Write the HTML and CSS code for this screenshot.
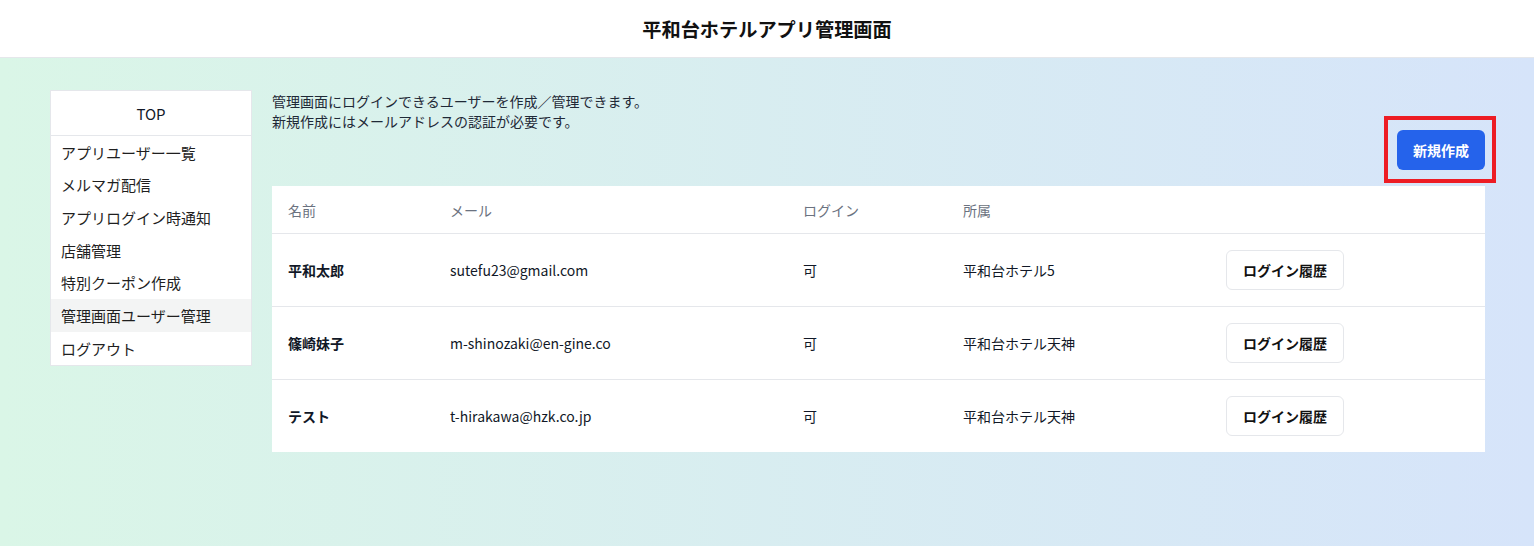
FILE: index.html
```html
<!DOCTYPE html>
<html lang="ja">
<head>
<meta charset="utf-8">
<title>平和台ホテルアプリ管理画面</title>
<link rel="stylesheet" href="styles.css">
</head>
<body>
<header class="topbar">
  <h1 class="title">平和台ホテルアプリ管理画面</h1>
</header>
<div class="page">
  <nav class="sidebar">
    <div class="side-top">TOP</div>
    <ul class="side-list">
      <li class="side-item">アプリユーザー一覧</li>
      <li class="side-item">メルマガ配信</li>
      <li class="side-item">アプリログイン時通知</li>
      <li class="side-item">店舗管理</li>
      <li class="side-item">特別クーポン作成</li>
      <li class="side-item active">管理画面ユーザー管理</li>
      <li class="side-item">ログアウト</li>
    </ul>
  </nav>
  <main class="content">
    <div class="desc">
      <p class="desc-line">管理画面にログインできるユーザーを作成／管理できます。</p>
      <p class="desc-line">新規作成にはメールアドレスの認証が必要です。</p>
    </div>
    <div class="actions">
      <div class="btn-wrap">
        <button class="btn-primary">新規作成</button>
        <span class="highlight"></span>
      </div>
    </div>
    <div class="table">
      <div class="row head">
        <div class="cell">名前</div>
        <div class="cell">メール</div>
        <div class="cell">ログイン</div>
        <div class="cell">所属</div>
        <div class="cell"></div>
      </div>
      <div class="row">
        <div class="cell name">平和太郎</div>
        <div class="cell">sutefu23@gmail.com</div>
        <div class="cell">可</div>
        <div class="cell">平和台ホテル5</div>
        <div class="cell"><button class="btn-outline">ログイン履歴</button></div>
      </div>
      <div class="row">
        <div class="cell name">篠崎妹子</div>
        <div class="cell">m-shinozaki@en-gine.co</div>
        <div class="cell">可</div>
        <div class="cell">平和台ホテル天神</div>
        <div class="cell"><button class="btn-outline">ログイン履歴</button></div>
      </div>
      <div class="row">
        <div class="cell name">テスト</div>
        <div class="cell">t-hirakawa@hzk.co.jp</div>
        <div class="cell">可</div>
        <div class="cell">平和台ホテル天神</div>
        <div class="cell"><button class="btn-outline">ログイン履歴</button></div>
      </div>
    </div>
  </main>
</div>
</body>
</html>
```
FILE: styles.css
```css
* { box-sizing: border-box; }
html, body { margin: 0; padding: 0; height: 100%; }
body {
  font-family: "Noto Sans CJK JP", "Noto Sans", sans-serif;
  color: #111827;
  background: linear-gradient(to right, #daf6e7, #d6e4fa);
}
.topbar {
  height: 58px;
  background: #fff;
  border-bottom: 1px solid #e5e7eb;
  display: flex;
  align-items: center;
  justify-content: center;
}
.title {
  margin: 0;
  font-size: 19.2px;
  font-weight: 700;
  color: #111;
}
.page {
  display: flex;
  align-items: flex-start;
  gap: 20px;
  padding: 32px 49px 0 50px;
}
.sidebar {
  width: 202px;
  flex: none;
  background: #fff;
  border: 1px solid #e5e7eb;
}
.side-top {
  height: 45px;
  display: flex;
  align-items: center;
  justify-content: center;
  font-size: 15px;
  border-bottom: 1px solid #e5e7eb;
}
.side-list {
  list-style: none;
  margin: 0;
  padding: 0;
}
.side-item {
  height: 32.67px;
  display: flex;
  align-items: center;
  padding: 0 10px;
  font-size: 15px;
  color: #1f1f1f;
}
.side-item.active { background: #f3f4f4; }
.content {
  flex: 1;
  min-width: 0;
}
.desc {
  padding-top: 1px;
}
.desc-line {
  margin: 0;
  height: 20px;
  line-height: 20px;
  font-size: 14px;
  color: #1f2937;
  white-space: nowrap;
}
.actions {
  display: flex;
  justify-content: flex-end;
  margin-top: -1px;
  margin-bottom: 16px;
}
.btn-wrap {
  position: relative;
}
.highlight {
  position: absolute;
  top: -14px;
  right: -11px;
  bottom: -13px;
  left: -13px;
  border: 4px solid #ed1c24;
  pointer-events: none;
}
.btn-primary {
  display: block;
  width: 88px;
  height: 40px;
  border: none;
  border-radius: 6px;
  background: #2563eb;
  color: #fff;
  font-family: inherit;
  font-size: 14px;
  font-weight: 700;
}
.table {
  background: #fff;
}
.row {
  display: grid;
  grid-template-columns: 162px 353px 160px 263px 1fr;
  align-items: center;
  height: 73px;
  border-bottom: 1px solid #e5e7eb;
  font-size: 14px;
}
.row:last-child { border-bottom: none; height: 72px; }
.row.head {
  height: 48px;
  color: #6b7280;
}
.cell { padding: 0 16px; }
.cell.name { font-weight: 700; }
.btn-outline {
  width: 118px;
  height: 40px;
  background: #fff;
  border: 1px solid #e5e7eb;
  border-radius: 6px;
  font-family: inherit;
  font-size: 14px;
  font-weight: 700;
  color: #111;
}
```
